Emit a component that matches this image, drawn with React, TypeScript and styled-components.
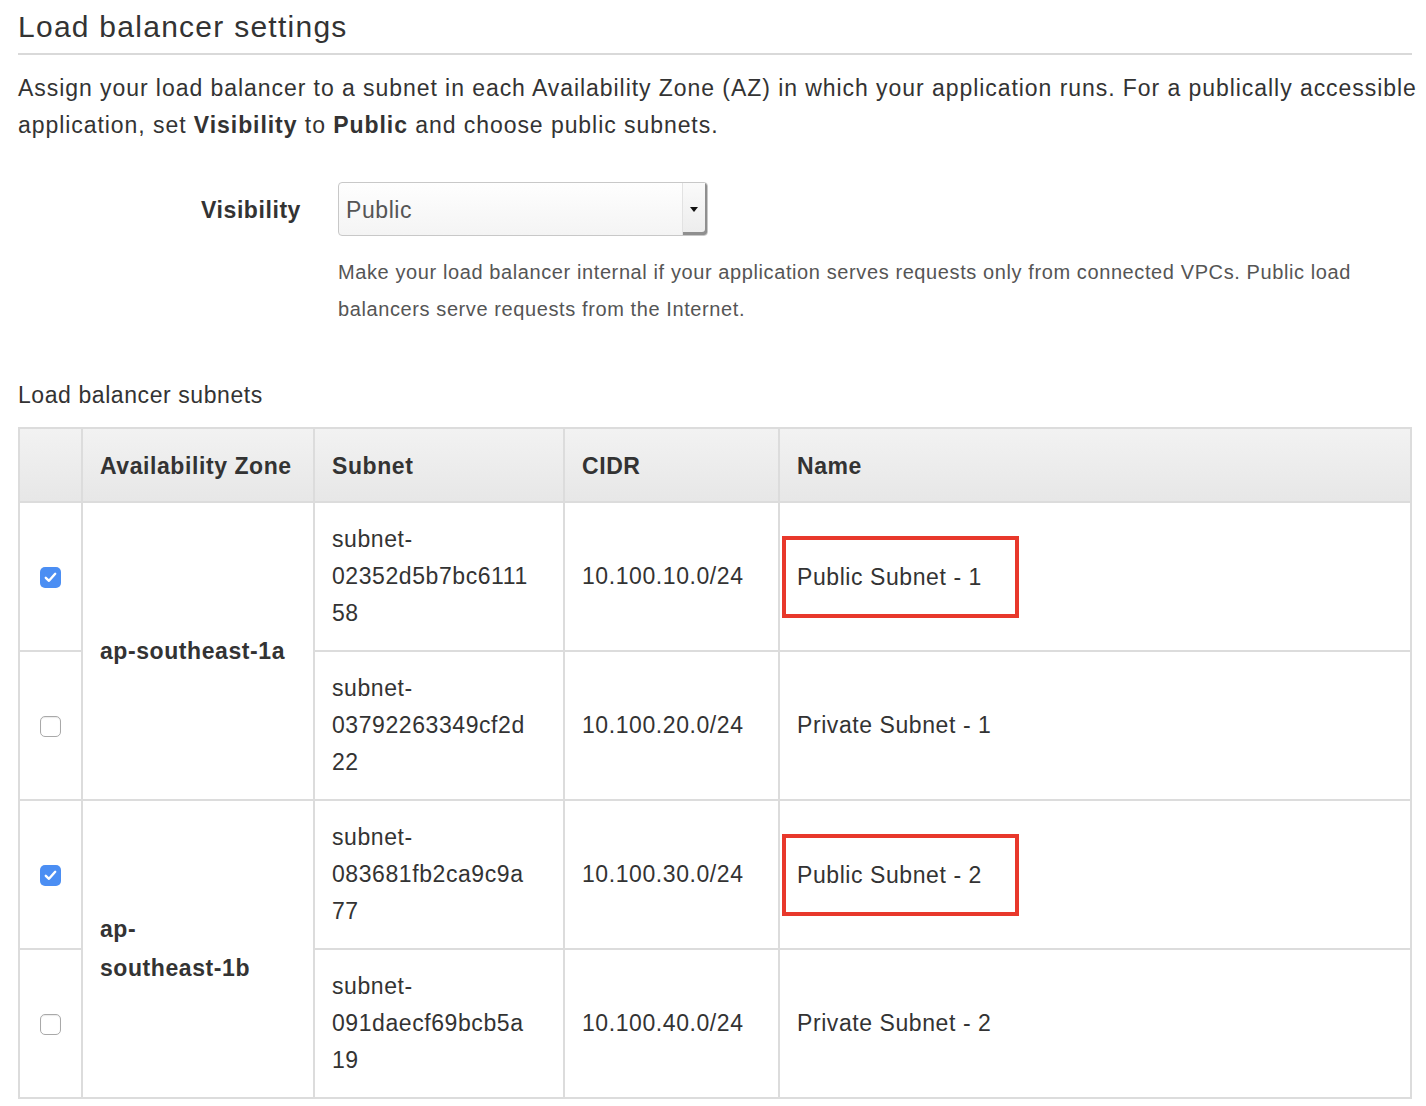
import styled, { createGlobalStyle } from "styled-components"

const GlobalStyle = createGlobalStyle`
    body{
        margin: 0;
        background: #fff;
        font-family: "Liberation Sans", Arial, sans-serif;
        letter-spacing: 0.036em;
        color: #333;
    }
`

const subnets = [
    { az: ["ap-southeast-1a"], span: 2, checked: true, id: ["subnet-", "02352d5b7bc6111", "58"], cidr: "10.100.10.0/24", name: "Public Subnet - 1", mark: true },
    { checked: false, id: ["subnet-", "03792263349cf2d", "22"], cidr: "10.100.20.0/24", name: "Private Subnet - 1" },
    { az: ["ap-", "southeast-1b"], span: 2, checked: true, id: ["subnet-", "083681fb2ca9c9a", "77"], cidr: "10.100.30.0/24", name: "Public Subnet - 2", mark: true },
    { checked: false, id: ["subnet-", "091daecf69bcb5a", "19"], cidr: "10.100.40.0/24", name: "Private Subnet - 2" },
]

const App = () => {
    return <Page>
        <GlobalStyle />
        <Title>Load balancer settings</Title>
        <Intro>
            Assign your load balancer to a subnet in each Availability Zone (AZ) in which your application runs. For a publically accessible<br />
            application, set <b>Visibility</b> to <b>Public</b> and choose public subnets.
        </Intro>
        <FieldRow>
            <FieldLabel>Visibility</FieldLabel>
            <div>
                <Select>
                    <span>Public</span>
                    <SelectArrow><i /></SelectArrow>
                </Select>
                <Help>
                    Make your load balancer internal if your application serves requests only from connected VPCs. Public load<br />
                    balancers serve requests from the Internet.
                </Help>
            </div>
        </FieldRow>
        <SubTitle>Load balancer subnets</SubTitle>
        <SubnetTable>
            <colgroup>
                <col style={{ width: 63 }} />
                <col style={{ width: 232 }} />
                <col style={{ width: 250 }} />
                <col style={{ width: 215 }} />
                <col />
            </colgroup>
            <thead>
                <tr>
                    <th></th>
                    <th>Availability Zone</th>
                    <th>Subnet</th>
                    <th>CIDR</th>
                    <th>Name</th>
                </tr>
            </thead>
            <tbody>
                {subnets.map(row => <tr key={row.cidr}>
                    <CheckCell>
                        <Check $checked={row.checked}>
                            {row.checked && <svg width="13" height="11" viewBox="0 0 13 11">
                                <path d="M1.8 5.8 L5 8.8 L11.2 1.8" fill="none" stroke="#fff" strokeWidth="2.4" strokeLinecap="round" strokeLinejoin="round" />
                            </svg>}
                        </Check>
                    </CheckCell>
                    {row.az && <ZoneCell rowSpan={row.span}>
                        {row.az.map((l, i) => <div key={i}>{l}</div>)}
                    </ZoneCell>}
                    <td>{row.id.map((l, i) => <div key={i}>{l}</div>)}</td>
                    <td>{row.cidr}</td>
                    <td>
                        {row.mark ? <Marked>{row.name}</Marked> : row.name}
                    </td>
                </tr>)}
            </tbody>
        </SubnetTable>
    </Page>
}

const Page = styled.div`
    padding: 0 14px 0 18px;
    width: 1394px;
`

const Title = styled.h1`
    margin: 0;
    padding: 9px 0 8px;
    font-size: 30px;
    letter-spacing: 0.042em;
    line-height: 36px;
    font-weight: normal;
    color: #333;
    border-bottom: 2px solid #d9d9d9;
`

const Intro = styled.p`
    margin: 15px 0 0;
    font-size: 23px;
    letter-spacing: 0.041em;
    line-height: 37px;
    white-space: nowrap;
    b{
        font-weight: bold;
    }
`

const FieldRow = styled.div`
    display: grid;
    grid-template-columns: 283px 1fr;
    column-gap: 37px;
    margin-top: 38px;
`

const FieldLabel = styled.div`
    text-align: right;
    font-weight: bold;
    font-size: 23px;
    line-height: 56px;
`

const Select = styled.div`
    box-sizing: border-box;
    width: 370px;
    height: 54px;
    display: flex;
    align-items: stretch;
    border: 1px solid #c8c8c8;
    border-radius: 4px;
    background: linear-gradient(#fefefe, #f4f4f4);
    font-size: 23px;
    color: #555;
    span{
        flex: 1;
        padding-left: 7px;
        line-height: 54px;
    }
`

const SelectArrow = styled.div`
    width: 24px;
    display: flex;
    align-items: center;
    justify-content: center;
    background: linear-gradient(#fafafa, #ececec);
    border-left: 1px solid #e2e2e2;
    box-shadow: inset -2px -3px 0 #8f8f8f;
    border-radius: 0 3px 3px 0;
    i{
        width: 0;
        height: 0;
        border-left: 4px solid transparent;
        border-right: 4px solid transparent;
        border-top: 5px solid #111;
        margin-right: 2px;
    }
`

const Help = styled.p`
    margin: 18px 0 0;
    font-size: 20px;
    letter-spacing: 0.03em;
    line-height: 37px;
    color: #555;
    white-space: nowrap;
`

const SubTitle = styled.h3`
    margin: 49px 0 0;
    font-size: 23px;
    line-height: 37px;
    font-weight: normal;
`

const SubnetTable = styled.table`
    margin-top: 13px;
    width: 1394px;
    table-layout: fixed;
    border-collapse: collapse;
    border: 2px solid #d6d6d6;
    font-size: 23px;
    th, td{
        border: 2px solid #dcdcdc;
        text-align: left;
        vertical-align: middle;
        padding: 18px 17px;
        line-height: 37px;
        color: #333;
    }
    th{
        height: 37px;
        padding-top: 19px;
        padding-bottom: 16px;
        font-weight: bold;
        background: linear-gradient(#f2f2f2, #e7e7e7);
    }
`

const CheckCell = styled.td`
    &&{
        padding: 0;
        text-align: center;
    }
`

const Check = styled.span<{ $checked: boolean }>`
    display: inline-flex;
    align-items: center;
    justify-content: center;
    box-sizing: border-box;
    width: 21px;
    height: 21px;
    vertical-align: middle;
    border-radius: 5px;
    background: ${p => p.$checked ? "#4b8ef3" : "#fff"};
    border: ${p => p.$checked ? "none" : "1.5px solid #a9a9a9"};
    box-shadow: ${p => p.$checked ? "none" : "inset 0 1px 1px rgba(0,0,0,0.08)"};
`

const ZoneCell = styled.td`
    &&{
        font-weight: bold;
        line-height: 39px;
    }
`

const Marked = styled.span`
    display: inline-block;
    box-sizing: border-box;
    width: 237px;
    height: 82px;
    margin-left: -15px;
    padding-left: 11px;
    line-height: 74px;
    border: 4px solid #e8382b;
    vertical-align: middle;
`

export default App
